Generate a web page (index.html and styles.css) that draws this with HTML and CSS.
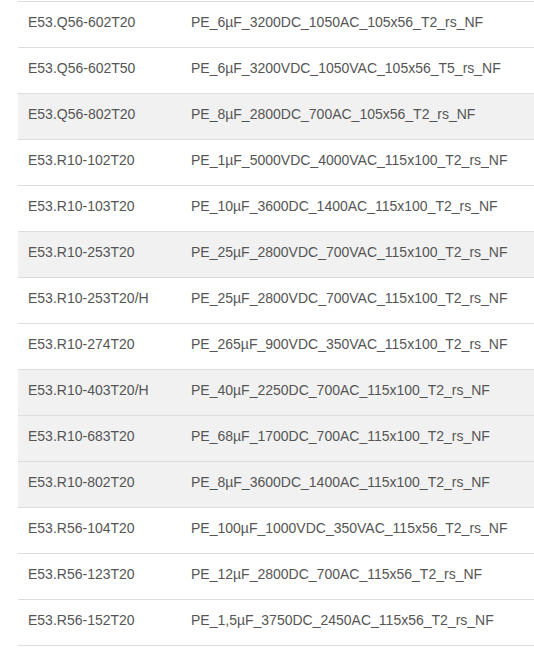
FILE: index.html
```html
<!DOCTYPE html>
<html lang="de">
<head>
  <meta charset="UTF-8" />
  <meta name="viewport" content="width=device-width, initial-scale=1.0" />
  <title>Kondensatoren</title>
  <link rel="stylesheet" href="styles.css">
</head>
<body>
  <main>
    <table class="parts">
      <colgroup>
        <col class="col-code">
        <col class="col-name">
      </colgroup>
      <tbody>
        <tr><td>E53.Q56-602T20</td><td>PE_6µF_3200DC_1050AC_105x56_T2_rs_NF</td></tr>
        <tr><td>E53.Q56-602T50</td><td>PE_6µF_3200VDC_1050VAC_105x56_T5_rs_NF</td></tr>
        <tr class="shaded"><td>E53.Q56-802T20</td><td>PE_8µF_2800DC_700AC_105x56_T2_rs_NF</td></tr>
        <tr><td>E53.R10-102T20</td><td>PE_1µF_5000VDC_4000VAC_115x100_T2_rs_NF</td></tr>
        <tr><td>E53.R10-103T20</td><td>PE_10µF_3600DC_1400AC_115x100_T2_rs_NF</td></tr>
        <tr class="shaded"><td>E53.R10-253T20</td><td>PE_25µF_2800VDC_700VAC_115x100_T2_rs_NF</td></tr>
        <tr><td>E53.R10-253T20/H</td><td>PE_25µF_2800VDC_700VAC_115x100_T2_rs_NF</td></tr>
        <tr><td>E53.R10-274T20</td><td>PE_265µF_900VDC_350VAC_115x100_T2_rs_NF</td></tr>
        <tr class="shaded"><td>E53.R10-403T20/H</td><td>PE_40µF_2250DC_700AC_115x100_T2_rs_NF</td></tr>
        <tr class="shaded"><td>E53.R10-683T20</td><td>PE_68µF_1700DC_700AC_115x100_T2_rs_NF</td></tr>
        <tr class="shaded"><td>E53.R10-802T20</td><td>PE_8µF_3600DC_1400AC_115x100_T2_rs_NF</td></tr>
        <tr><td>E53.R56-104T20</td><td>PE_100µF_1000VDC_350VAC_115x56_T2_rs_NF</td></tr>
        <tr><td>E53.R56-123T20</td><td>PE_12µF_2800DC_700AC_115x56_T2_rs_NF</td></tr>
        <tr><td>E53.R56-152T20</td><td>PE_1,5µF_3750DC_2450AC_115x56_T2_rs_NF</td></tr>
      </tbody>
    </table>
  </main>
</body>
</html>
```

FILE: styles.css
```css
body {
  font-family: 'Liberation Sans', Arial, sans-serif;
  font-size: 14px;
  color: #555555;
  background: #ffffff;
  margin: 0;
  padding: 0;
  overflow: hidden;
}

main {
  padding: 1px 0 0 18px;
}

.parts {
  width: 516px;
  table-layout: fixed;
  border-collapse: collapse;
  border-bottom: 1px solid #dddddd;
}

.col-code {
  width: 163px;
}

.parts td {
  border-top: 1px solid #dddddd;
  height: 45px;
  box-sizing: border-box;
  padding: 10px 10px 15px;
  line-height: 20px;
  vertical-align: top;
  white-space: nowrap;
  overflow: hidden;
}

.parts tr.shaded td {
  background: #f1f1f1;
}
```
